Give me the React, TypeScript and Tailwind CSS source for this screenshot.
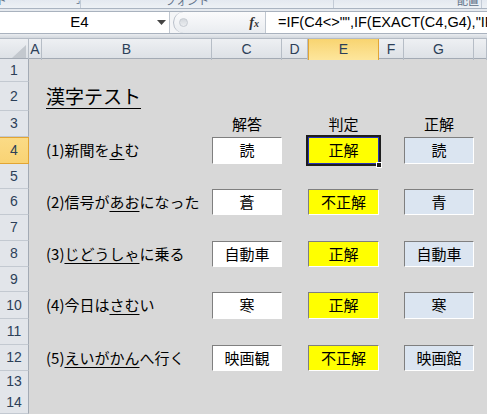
import React from 'react';

type Row = {
  n: number;
  h: string;
  kind?: 'title' | 'heads' | 'q';
  label?: React.ReactNode;
  ans?: string;
  judge?: string;
  correct?: string;
  selected?: boolean;
};

const rows: Row[] = [
  { n: 1, h: 'h-[23px]' },
  { n: 2, h: 'h-[29px]', kind: 'title' },
  { n: 3, h: 'h-[26px]', kind: 'heads' },
  { n: 4, h: 'h-[27px]', kind: 'q', label: <>(1)新聞を<u>よ</u>む</>, ans: '読', judge: '正解', correct: '読', selected: true },
  { n: 5, h: 'h-[25px]' },
  { n: 6, h: 'h-[26px]', kind: 'q', label: <>(2)信号が<u>あお</u>になった</>, ans: '蒼', judge: '不正解', correct: '青' },
  { n: 7, h: 'h-[26px]' },
  { n: 8, h: 'h-[26px]', kind: 'q', label: <>(3)<u>じどうしゃ</u>に乗る</>, ans: '自動車', judge: '正解', correct: '自動車' },
  { n: 9, h: 'h-[25px]' },
  { n: 10, h: 'h-[27px]', kind: 'q', label: <>(4)今日は<u>さむ</u>い</>, ans: '寒', judge: '正解', correct: '寒' },
  { n: 11, h: 'h-[26px]' },
  { n: 12, h: 'h-[26px]', kind: 'q', label: <>(5)<u>えいがかん</u>へ行く</>, ans: '映画観', judge: '不正解', correct: '映画館' },
  { n: 13, h: 'h-[21px]' },
  { n: 14, h: 'h-[21px]' },
];

const cols = ['A', 'B', 'C', 'D', 'E', 'F', 'G', 'H'];
const grid = 'grid grid-cols-[29px_13px_170px_70px_26px_71px_25px_70px_1fr]';

const Box = ({ text, tone, selected }: { text: string; tone: string; selected?: boolean }) => (
  <div className="relative flex">
    <div
      className={`flex-1 flex items-center justify-center text-[15px] text-black ${tone} ${
        selected
          ? 'border border-[#2733b8] outline-2 outline-[#1e1e1e]'
          : 'border-t border-l border-[#7f7f7f] border-r border-b border-r-white border-b-white'
      }`}
    >
      {text}
    </div>
    {selected && <div className="absolute right-[-3px] bottom-[-4px] w-[6px] h-[6px] bg-[#1e1e1e] border border-white" />}
  </div>
);

const App: React.FC = () => {
  return (
    <div className="w-[487px] h-[414px] overflow-hidden bg-[#d8d8d8] font-['Noto_Sans_CJK_JP','Noto_Sans',sans-serif] select-none">
      {/* ribbon bottom edge */}
      <div className="h-[9px] flex items-end overflow-hidden bg-gradient-to-b from-[#e4e9f0] to-[#edf1f5] border-b border-[#aab4c1] text-[11px] leading-[12px] text-[#5d6f86]">
        <div className="w-[81px] h-full flex items-end border-r border-[#c3cbd6] pb-[2px]">
          <span className="ml-[-4px]">クリップボード</span>
          <span className="ml-[4px] text-[9px]">⌟</span>
        </div>
        <div className="w-[253px] h-full flex items-end justify-center border-r border-[#c3cbd6] pb-[2px]">
          <span className="ml-[-40px]">フォント</span>
        </div>
        <div className="w-[148px] h-full flex items-end justify-end border-r border-[#c3cbd6] pb-[2px] pr-[2px]">
          <span>配置</span>
        </div>
        <div className="flex-1" />
      </div>

      {/* formula bar */}
      <div className="bg-[#e6eaef] pt-[2px]">
        <div className="h-[23px] flex border-y border-[#a9b2be] bg-white">
          <div className="w-[170px] flex items-center border-r border-[#c0c7d0] font-['Liberation_Sans',sans-serif] text-[15px] text-black">
            <span className="flex-1 text-center pl-[2px]">E4</span>
            <svg width="9" height="5" className="mr-[3px]" viewBox="0 0 9 5">
              <path d="M0 0 H9 L4.5 5 Z" fill="#444" />
            </svg>
          </div>
          <div className="w-[96px] flex bg-[#f4f5f7] pl-[3px] border-r border-[#c0c7d0]">
            <div className="flex-1 flex items-center rounded-l-full border-l border-[#b7bec8] bg-gradient-to-b from-[#fbfbfc] to-[#e9ecf0] pl-[5px] pr-[6px]">
              <div className="w-[9px] h-[9px] rounded-full bg-gradient-to-b from-[#d4d8dd] to-[#eceef1] border border-[#c6cbd2]" />
              <span className="ml-auto font-['Liberation_Serif',serif] italic font-bold text-[14px] text-[#333] leading-none">
                f<span className="text-[10px]">x</span>
              </span>
            </div>
          </div>
          <div className="flex-1 flex items-center overflow-hidden whitespace-nowrap pl-[12px] font-['Liberation_Sans',sans-serif] text-[14.5px] text-black">
            =IF(C4&lt;&gt;"",IF(EXACT(C4,G4),"IF(正解","不正解"),"")
          </div>
        </div>
        <div className="h-[5px] bg-gradient-to-b from-[#e9ecf0] to-[#d3d8de] border-b border-[#b4bbc5]" />
      </div>

      {/* column headers */}
      <div className={`${grid} h-[20px] bg-gradient-to-b from-[#eef0f3] to-[#dde1e6] border-b border-[#a3aab4] font-['Liberation_Sans',sans-serif] text-[14px] text-[#2c3f58]`}>
        <div className="flex items-end justify-end border-r border-[#b6bdc6] pr-[2px] pb-[2px]">
          <svg width="14" height="13" viewBox="0 0 14 13">
            <path d="M14 0 V13 H0 Z" fill="#c3c8ce" />
          </svg>
        </div>
        {cols.map((c) => (
          <div
            key={c}
            className={`flex items-center justify-center border-r ${
              c === 'E'
                ? 'bg-gradient-to-b from-[#f8d470] to-[#fde69c] border-[#e2a534] border-l border-l-[#e2a534]'
                : 'border-[#b6bdc6]'
            }`}
          >
            {c === 'H' ? '' : c}
          </div>
        ))}
      </div>

      {/* sheet rows */}
      {rows.map((r) => (
        <div key={r.n} className={`${grid} ${r.h}`}>
          <div
            className={`flex items-center justify-center font-['Liberation_Sans',sans-serif] text-[14px] text-[#2c3f58] border-r border-b ${
              r.selected
                ? 'bg-gradient-to-b from-[#fbdb86] to-[#f9d374] border-[#e2a534] border-t border-t-[#e2a534]'
                : 'bg-[#e2e5ea] border-r-[#a3aab4] border-b-[#c3c9d1]'
            }`}
          >
            {r.n}
          </div>
          <div />
          <div className="flex items-center pl-[4px] text-black whitespace-nowrap">
            {r.kind === 'title' && <span className="text-[19px] underline underline-offset-[4px] decoration-1">漢字テスト</span>}
            {r.kind === 'q' && <span className="text-[15px] underline-offset-[3px] decoration-1">{r.label}</span>}
          </div>
          {r.kind === 'heads' ? (
            <>
              <div className="flex items-center justify-center text-[15px] text-black">解答</div>
              <div />
              <div className="flex items-center justify-center text-[15px] text-black">判定</div>
              <div />
              <div className="flex items-center justify-center text-[15px] text-black">正解</div>
              <div />
            </>
          ) : r.kind === 'q' ? (
            <>
              <Box text={r.ans!} tone="bg-white" />
              <div />
              <Box text={r.judge!} tone="bg-[#ffff00]" selected={r.selected} />
              <div />
              <Box text={r.correct!} tone="bg-[#dbe5f1]" />
              <div />
            </>
          ) : (
            <>
              <div />
              <div />
              <div />
              <div />
              <div />
              <div />
            </>
          )}
        </div>
      ))}
    </div>
  );
};

export default App;
